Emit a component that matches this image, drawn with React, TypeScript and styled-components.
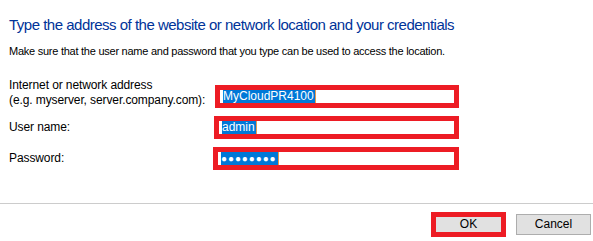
import React from 'react';
import styled, { createGlobalStyle } from 'styled-components';

const GlobalStyle = createGlobalStyle`
  html, body {
    margin: 0;
    padding: 0;
    background: #ffffff;
  }
  body {
    font-family: "Liberation Sans", Arial, sans-serif;
    font-size: 11px;
    letter-spacing: -0.25px;
    color: #000000;
  }
`;

const Dialog = styled.div`
  width: 593px;
  height: 241px;
  display: flex;
  flex-direction: column;
  background: #ffffff;
  overflow: hidden;
`;

const Body = styled.div`
  flex: 1;
  padding: 15px 9px 0 9px;
`;

const Title = styled.h1`
  margin: 0;
  font-size: 15px;
  font-weight: 400;
  line-height: 20px;
  letter-spacing: -0.5px;
  color: #003399;
`;

const Subtitle = styled.p`
  margin: 8px 0 0 0;
  line-height: 16px;
`;

const Form = styled.div`
  display: grid;
  grid-template-columns: 204px 246px;
  row-gap: 8px;
  margin-top: 19px;
  align-items: center;
`;

const Label = styled.div`
  font-size: 12px;
  letter-spacing: -0.1px;
  line-height: 15px;
  white-space: nowrap;
`;

const Highlight = styled.div<{ $shift?: number; $low?: boolean }>`
  border: 5px solid #ed1c24;
  margin-left: ${p => p.$shift ?? 0}px;
  align-self: ${p => (p.$low ? 'end' : 'center')};
`;

const Field = styled.div`
  height: 13px;
  padding-left: 3px;
  background: #ffffff;
  display: flex;
  align-items: center;
  line-height: 13px;
  white-space: nowrap;
`;

const Selected = styled.span<{ $dots?: boolean }>`
  background: #0078d7;
  color: #ffffff;
  height: 13px;
  padding: 0 1px 0 0;
  border-right: 1px solid #e89a4c;
  font-size: ${p => (p.$dots ? '10px' : '12px')};
  letter-spacing: ${p => (p.$dots ? '0.9px' : '0')};
`;

const Footer = styled.div`
  height: 38px;
  box-sizing: border-box;
  border-top: 1px solid #cccccc;
  display: flex;
  justify-content: flex-end;
  align-items: center;
  gap: 10px;
  padding: 3px 2px 0 0;
`;

const ButtonFrame = styled.div`
  border: 5px solid #ed1c24;
`;

const Button = styled.button<{ $framed?: boolean }>`
  display: block;
  width: ${p => (p.$framed ? '65px' : '75px')};
  height: ${p => (p.$framed ? '15px' : '21px')};
  padding: 0;
  margin: 0;
  background: #e1e1e1;
  border: ${p => (p.$framed ? 'none' : '1px solid #adadad')};
  font-family: "Liberation Sans", Arial, sans-serif;
  font-size: 12px;
  line-height: 15px;
  color: #000000;
`;

const App: React.FC = () => {
  return (
    <Dialog>
      <GlobalStyle />
      <Body>
        <Title>Type the address of the website or network location and your credentials</Title>
        <Subtitle>Make sure that the user name and password that you type can be used to access the location.</Subtitle>
        <Form>
          <Label>
            Internet or network address
            <br />
            (e.g. myserver, server.company.com):
          </Label>
          <Highlight $shift={2} $low>
            <Field>
              <Selected>MyCloudPR4100</Selected>
            </Field>
          </Highlight>
          <Label>User name:</Label>
          <Highlight $shift={1}>
            <Field>
              <Selected>admin</Selected>
            </Field>
          </Highlight>
          <Label>Password:</Label>
          <Highlight>
            <Field>
              <Selected $dots>●●●●●●●●</Selected>
            </Field>
          </Highlight>
        </Form>
      </Body>
      <Footer>
        <ButtonFrame>
          <Button $framed>OK</Button>
        </ButtonFrame>
        <Button>Cancel</Button>
      </Footer>
    </Dialog>
  );
};

export default App;
